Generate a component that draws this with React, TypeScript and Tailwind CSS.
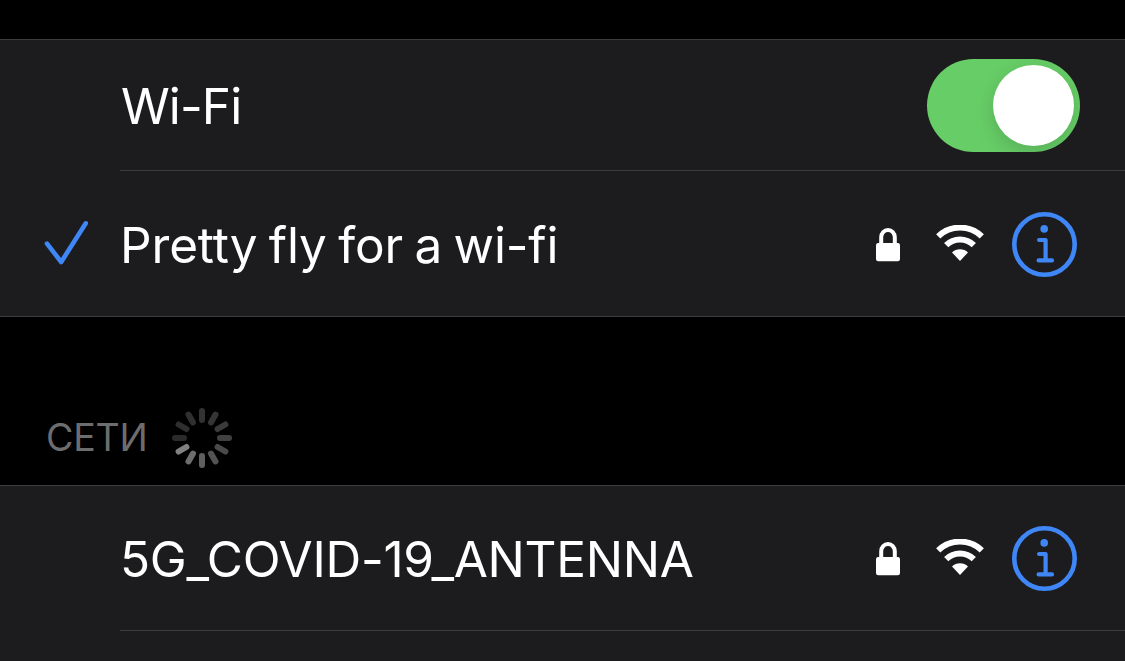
const networks = [
  { ssid: 'Pretty fly for a wi-fi', connected: true },
  { ssid: '5G_COVID-19_ANTENNA', connected: false },
];

// Spoke colours, clockwise from 12 o'clock
const spokes = [
  '#323233', '#353536', '#3a3a3b', '#414142', '#4a4a4b', '#535354',
  '#5f5f60', '#6d6d6e', '#818182', '#2b2b2c', '#2e2e2f', '#303031',
];

function Spinner() {
  return (
    <svg width="60" height="60" viewBox="-30 -30 60 60">
      {spokes.map((color, i) => (
        <rect key={i} x="-3" y="-30" width="6" height="15" rx="3" fill={color} transform={`rotate(${i * 30})`} />
      ))}
    </svg>
  );
}

function Checkmark() {
  return (
    <svg width="46" height="49" viewBox="0 0 46 49" fill="none" stroke="#3f86f6" strokeWidth="4.6" strokeLinecap="round" strokeLinejoin="round">
      <path d="M5 23.6 19.2 42 43.8 3.3" />
    </svg>
  );
}

function LockIcon() {
  return (
    <svg className="mt-px" width="24" height="34" viewBox="0 0 24 34">
      <path d="M5.2 17V9.3a6.8 7.2 0 0 1 13.6 0V17" fill="none" stroke="#fff" strokeWidth="4" />
      <rect y="15" width="24" height="18.2" rx="2.2" fill="#fff" />
    </svg>
  );
}

function WifiIcon() {
  return (
    <svg width="48" height="36" viewBox="0 0 48 36">
      <g fill="none" stroke="#fff" strokeWidth="6">
        <path d="M2.2 11.4a31.4 31.4 0 0 1 43.6 0" />
        <path d="M10.2 20.2a19.6 19.6 0 0 1 27.6 0" />
      </g>
      <path d="M16 27.4a11.6 11.6 0 0 1 16 0L24 36Z" fill="#fff" />
    </svg>
  );
}

function InfoIcon() {
  return (
    <svg width="65" height="65" viewBox="0 0 65 65" fill="none" stroke="#3f86f6" strokeLinecap="round" strokeLinejoin="round">
      <circle cx="32.5" cy="32.5" r="30.2" strokeWidth="4.6" />
      <circle cx="32.2" cy="16.9" r="3.8" fill="#3f86f6" stroke="none" />
      <path d="M27.1 28H33.6V48.4M26.6 48.4H40" strokeWidth="4.2" />
    </svg>
  );
}

function NetworkIcons() {
  return (
    <div className="flex items-center pr-12">
      <LockIcon />
      <div className="mb-[3px] ml-9 mr-7">
        <WifiIcon />
      </div>
      <InfoIcon />
    </div>
  );
}

export default function App() {
  const [current, other] = networks;

  return (
    <div className="flex h-[661px] w-[1125px] flex-col overflow-hidden bg-black pt-[39px] font-['Inter',sans-serif] text-[49.5px] leading-[60px] text-white">
      {/* Wi-Fi switch and connected network */}
      <section className="border-y border-[#3c3c3f] bg-[#1c1c1e]">
        <div className="ml-[120px] flex h-[131px] items-center justify-between border-b border-[#3c3c3f] pr-[45px]">
          <span className="pl-px pt-0.5 tracking-[-0.9px]">Wi-Fi</span>
          <div className="flex h-[93px] w-[153px] items-center justify-end overflow-hidden rounded-full bg-[#67ce67] pr-1.5">
            <div className="size-[81px] rounded-full bg-white shadow-[0_6px_20px_rgba(0,0,0,0.16)]" />
          </div>
        </div>
        <div className="flex h-[145px] items-center pt-0.5">
          <div className="w-[120px] pl-[42px]">{current.connected && <Checkmark />}</div>
          <span className="flex-1 tracking-[-0.15px] [word-spacing:-2.3px]">{current.ssid}</span>
          <NetworkIcons />
        </div>
      </section>

      {/* Section heading */}
      <div className="flex h-[168px] items-end gap-[25px] pb-[17px] pl-[46px]">
        <span className="pb-1.5 text-[37.5px] leading-[48px] tracking-[-0.25px] text-[#6d6d6f]">СЕТИ</span>
        <Spinner />
      </div>

      {/* Available networks */}
      <section className="flex-1 border-t border-[#3c3c3f] bg-[#1c1c1e]">
        <div className="ml-[120px] flex h-[145px] items-center border-b border-[#3c3c3f]">
          <span className="flex-1 pt-0.5 tracking-[-0.28px]">{other.ssid}</span>
          <NetworkIcons />
        </div>
      </section>
    </div>
  );
}
